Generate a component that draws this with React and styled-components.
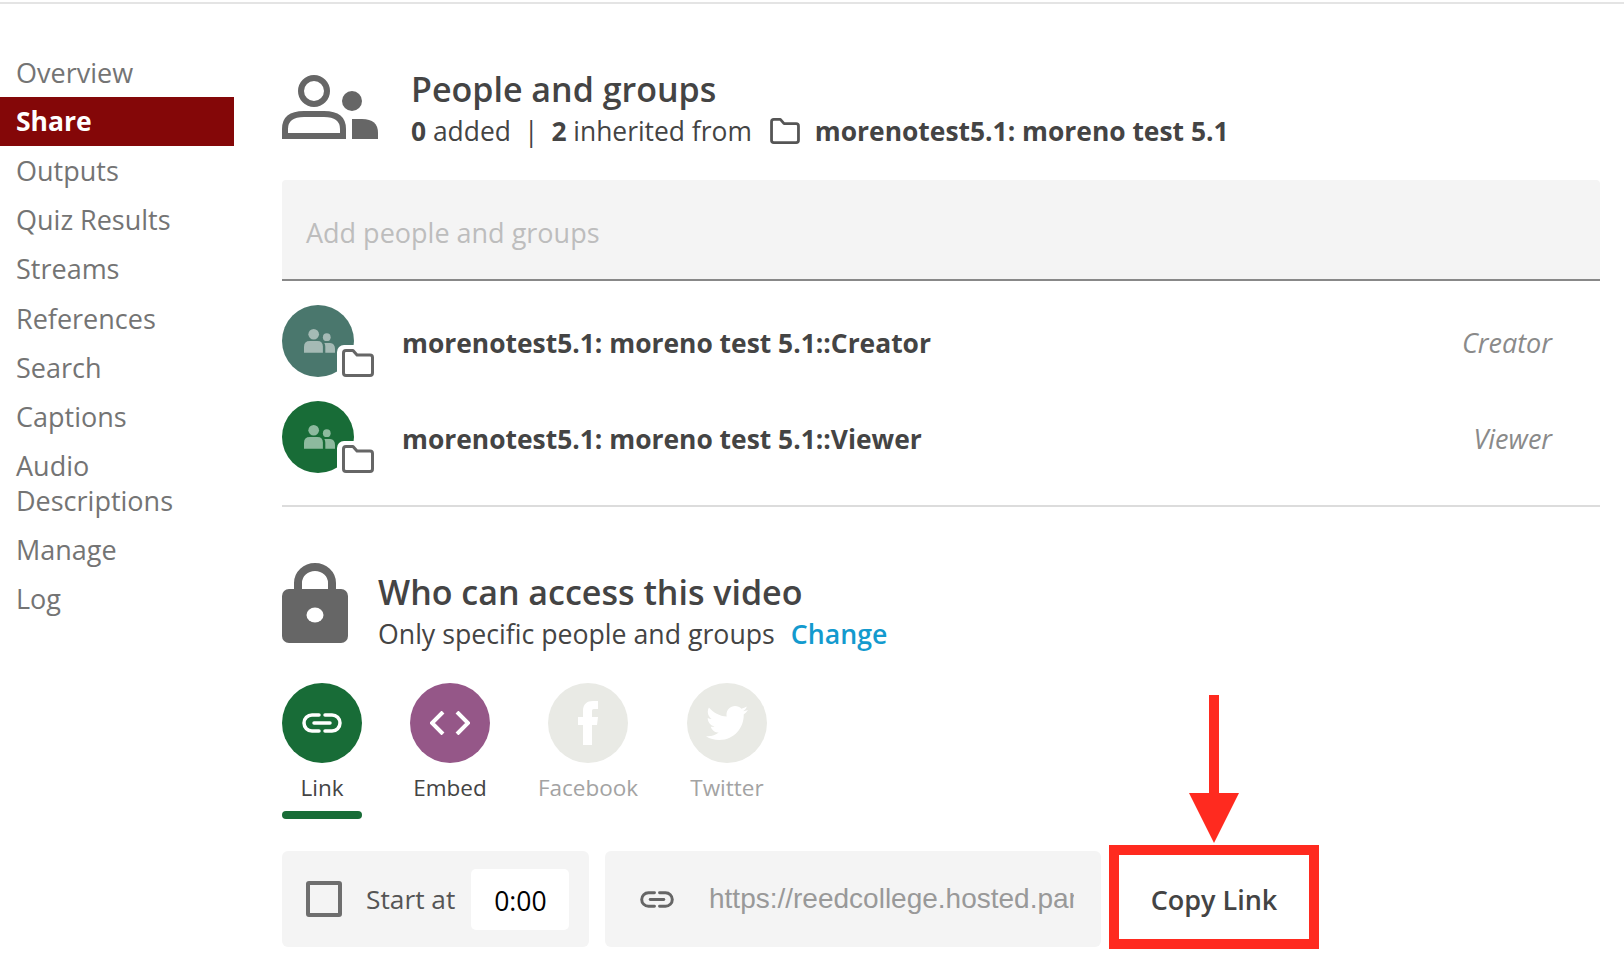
import React from 'react';
import styled, { createGlobalStyle } from 'styled-components';
import { FaTwitter } from 'react-icons/fa';

const GlobalStyle = createGlobalStyle`
  html, body {
    margin: 0;
    padding: 0;
    background: #fff;
    overflow: hidden;
  }
  body {
    font-family: "Open Sans", "Noto Sans", sans-serif;
    color: #444;
  }
  * { box-sizing: border-box; }
`;

const Page = styled.div`
  width: 1624px;
  height: 957px;
  border-top: 2px solid #e4e4e4;
  margin-top: 2px;
  display: flex;
  align-items: flex-start;
`;

const Sidebar = styled.nav`
  width: 234px;
  flex-shrink: 0;
  padding-top: 44px;
`;

const NavItem = styled.div`
  padding: 7.05px 16px;
  font-size: ${(p) => (p.$active ? 26.5 : 27)}px;
  line-height: 35px;
  color: ${(p) => (p.$active ? '#fff' : '#747474')};
  font-weight: ${(p) => (p.$active ? 700 : 400)};
  background: ${(p) => (p.$active ? '#840708' : 'transparent')};
`;

const Main = styled.main`
  flex: 1;
  padding: 70px 24px 0 48px;
`;

const Header = styled.header`
  display: flex;
  align-items: flex-start;
  gap: 33px;
`;

const HeaderText = styled.div`
  margin-top: -6px;
`;

const Title = styled.h2`
  margin: 0;
  font-size: 34px;
  line-height: 42px;
  font-weight: 600;
  color: #444;
`;

const SubLine = styled.div`
  display: flex;
  align-items: center;
  margin-top: 2px;
  font-size: 26.4px;
  line-height: 38px;
  color: #444;
  white-space: nowrap;

  b { font-weight: 700; }
`;

const Sep = styled.span`
  margin: 0 13px 0 13px;
`;

const FolderSlot = styled.span`
  display: inline-flex;
  margin: 0 15px 0 18px;
`;

const SearchBox = styled.div`
  margin-top: 30px;
  height: 101px;
  background: #f4f4f4;
  border-bottom: 2px solid #888;
  border-radius: 4px 4px 0 0;
  padding: 6px 24px 0;
  display: flex;
  align-items: center;
  font-size: 27px;
  color: #bdbdbd;
`;

const Row = styled.div`
  display: flex;
  align-items: center;
  height: 72px;
  margin-top: ${(p) => p.$gap}px;
`;

const Avatar = styled.div`
  position: relative;
  width: 72px;
  height: 72px;
  padding-left: 3px;
  border-radius: 50%;
  background: ${(p) => p.$color};
  display: flex;
  align-items: center;
  justify-content: center;
  flex-shrink: 0;
  margin-right: 48px;
`;

const FolderBadge = styled.div`
  position: absolute;
  left: 55px;
  top: 40px;
  padding: 4px 0 0 5px;
  width: 38px;
  height: 34px;
  background: #fff;
  border-radius: 7px;
  display: flex;
`;

const RowName = styled.div`
  flex: 1;
  padding-top: 4px;
  font-size: 26.4px;
  font-weight: 700;
  color: #444;
`;

const RowRole = styled.div`
  padding: 2px 48px 0 0;
  font-size: 27px;
  font-style: italic;
  color: #8a8a8a;
`;

const Divider = styled.hr`
  border: 0;
  height: 2px;
  margin: 32px 0 0;
  background: #dcdcdc;
`;

const AccessHeader = styled.div`
  margin-top: 56px;
  display: flex;
  align-items: flex-start;
  gap: 30px;
`;

const AccessText = styled.div`
  margin-top: 8px;
`;

const AccessSub = styled.div`
  font-size: 26.7px;
  line-height: 42px;
  color: #444;
`;

const ChangeLink = styled.a`
  color: #139ace;
  font-weight: 600;
  margin-left: 16px;
`;

const ShareTabs = styled.div`
  display: flex;
  margin-top: 28px;
`;

const ShareTab = styled.div`
  width: 80px;
  margin-right: ${(p) => p.$gap}px;
  display: flex;
  flex-direction: column;
  align-items: center;
  flex-shrink: 0;
`;

const TabCircle = styled.div`
  width: 80px;
  height: 80px;
  border-radius: 50%;
  background: ${(p) => p.$color};
  display: flex;
  align-items: center;
  justify-content: center;
  color: #fff;
`;

const TabLabel = styled.div`
  margin-top: 8px;
  font-size: 22.5px;
  line-height: 34px;
  white-space: nowrap;
  color: ${(p) => (p.$muted ? '#a3a3a3' : '#444')};
`;

const TabUnderline = styled.div`
  width: 80px;
  height: 8px;
  margin-top: 6px;
  border-radius: 4px;
  background: ${(p) => (p.$on ? '#186c37' : 'transparent')};
`;

const Controls = styled.div`
  display: flex;
  align-items: flex-start;
  margin-top: 26px;
`;

const StartBox = styled.div`
  width: 307px;
  height: 96px;
  margin-top: 6px;
  padding-left: 24px;
  background: #f4f4f4;
  border-radius: 6px;
  display: flex;
  align-items: center;
`;

const Checkbox = styled.div`
  width: 36px;
  height: 36px;
  border: 4px solid #6e6e6e;
  border-radius: 3px;
  margin-right: 24px;
`;

const StartLabel = styled.div`
  font-size: 26.3px;
  color: #555;
  margin-right: 16px;
  white-space: nowrap;
`;

const TimeInput = styled.div`
  width: 98px;
  height: 61px;
  padding-top: 3px;
  background: #fff;
  border-radius: 5px;
  display: flex;
  align-items: center;
  justify-content: center;
  font-size: 26.5px;
  color: #000;
`;

const UrlBox = styled.div`
  width: 496px;
  height: 96px;
  margin: 6px 0 0 16px;
  padding: 0 27px 0 35px;
  background: #f4f4f4;
  border-radius: 6px;
  display: flex;
  align-items: center;
  gap: 35px;
  overflow: hidden;
`;

const UrlText = styled.div`
  flex: 1;
  font-family: "Liberation Sans", Arial, sans-serif;
  font-size: 28px;
  color: #999;
  white-space: nowrap;
  overflow: hidden;
`;

const CopyWrap = styled.div`
  position: relative;
  margin-left: 8px;
`;

const CopyButton = styled.div`
  width: 210px;
  height: 104px;
  padding-top: 5px;
  border: 10px solid #ff2a1f;
  background: #fff;
  display: flex;
  align-items: center;
  justify-content: center;
  font-size: 27px;
  font-weight: 600;
  color: #444;
  white-space: nowrap;
`;

const CalloutArrow = styled.svg`
  position: absolute;
  left: 80px;
  top: -150px;
`;

const PeopleIcon = () => (
  <svg width="96" height="64" viewBox="0 0 96 64" fill="#666" style={{ flexShrink: 0, marginTop: 1 }}>
    <circle cx="32" cy="16" r="13" fill="none" stroke="#666" strokeWidth="6" />
    <path
      fillRule="evenodd"
      d="M0 64V54Q0 36 22 36H42Q64 36 64 54V64ZM6 58H58V54Q58 42 42 42H22Q6 42 6 54Z"
    />
    <circle cx="70" cy="26" r="10" />
    <path d="M70 44H80Q96 44 96 58V64H70Z" />
  </svg>
);

const GroupIcon = ({ fill }) => (
  <svg width="31" height="26" viewBox="0 0 32 26" fill={fill}>
    <circle cx="10" cy="6" r="5.5" />
    <path d="M0 25V19Q0 13 6 13H14Q19.500 13 19.500 19V25Z" />
    <circle cx="23.500" cy="9" r="4" />
    <path d="M22 25V19Q22 16.500 21 15H27Q32 15.500 32 21V25Z" />
  </svg>
);

const FolderIcon = ({ width = 32, height = 28, stroke = '#666' }) => (
  <svg width={width} height={height} viewBox="0 0 32 28" fill="none" stroke={stroke} strokeWidth="3" strokeLinejoin="round">
    <path d="M1.500 4Q1.500 1.500 4 1.500H11L15 6H28Q30.500 6 30.500 8.500V24Q30.500 26.500 28 26.500H4Q1.500 26.500 1.500 24Z" />
  </svg>
);

const LockIcon = () => (
  <svg width="66" height="80" viewBox="0 0 66 80" style={{ flexShrink: 0 }}>
    <path fill="none" stroke="#666" strokeWidth="8" d="M16 30V20A17 16 0 0 1 50 20V30" />
    <rect x="0" y="26" width="66" height="54" rx="7" fill="#666" />
    <ellipse cx="33" cy="52" rx="8.500" ry="7.500" fill="#fff" />
  </svg>
);

const LinkIcon = ({ stroke = '#fff', width = 40, height = 20 }) => (
  <svg width={width} height={height} viewBox="0 0 40 20" fill="none" stroke={stroke} strokeWidth="3.500" strokeLinecap="round">
    <path d="M17 2H10A8 8 0 0 0 10 18H17" />
    <path d="M23 2H30A8 8 0 0 1 30 18H23" />
    <path d="M12 10H28" />
  </svg>
);

const EmbedIcon = () => (
  <svg width="40" height="24" viewBox="0 0 40 24" fill="none" stroke="#fff" strokeWidth="4">
    <path d="M13 1L2 12L13 23" />
    <path d="M27 1L38 12L27 23" />
  </svg>
);

const FacebookIcon = () => (
  <svg width="20" height="44" viewBox="0 0 20 44" fill="#fff">
    <path d="M5 44V24H0V16H5V10C5 3 9 0 15 0H20V8H16C14 8 14 9 14 11V16H20L19 24H14V44Z" />
  </svg>
);

const navItems = ['Overview', 'Share', 'Outputs', 'Quiz Results', 'Streams', 'References', 'Search', 'Captions', 'Audio Descriptions', 'Manage', 'Log'];

const App = () => (
  <>
    <GlobalStyle />
    <Page>
      <Sidebar>
        {navItems.map((item) => (
          <NavItem key={item} $active={item === 'Share'}>{item}</NavItem>
        ))}
      </Sidebar>
      <Main>
        <Header>
          <PeopleIcon />
          <HeaderText>
            <Title>People and groups</Title>
            <SubLine>
              <b>0</b>&nbsp;added<Sep>|</Sep><b>2</b>&nbsp;inherited from
              <FolderSlot>
                <FolderIcon width={30} height={26} stroke="#555" />
              </FolderSlot>
              <b>morenotest5.1: moreno test 5.1</b>
            </SubLine>
          </HeaderText>
        </Header>

        <SearchBox>Add people and groups</SearchBox>

        <Row $gap={24}>
          <Avatar $color="#4a776d">
            <GroupIcon fill="#a5bab5" />
            <FolderBadge><FolderIcon /></FolderBadge>
          </Avatar>
          <RowName>morenotest5.1: moreno test 5.1::Creator</RowName>
          <RowRole>Creator</RowRole>
        </Row>
        <Row $gap={24}>
          <Avatar $color="#186c37">
            <GroupIcon fill="#8dba9e" />
            <FolderBadge><FolderIcon /></FolderBadge>
          </Avatar>
          <RowName>morenotest5.1: moreno test 5.1::Viewer</RowName>
          <RowRole>Viewer</RowRole>
        </Row>

        <Divider />

        <AccessHeader>
          <LockIcon />
          <AccessText>
            <Title>Who can access this video</Title>
            <AccessSub>
              Only specific people and groups<ChangeLink>Change</ChangeLink>
            </AccessSub>
          </AccessText>
        </AccessHeader>

        <ShareTabs>
          <ShareTab $gap={48}>
            <TabCircle $color="#186c37"><LinkIcon /></TabCircle>
            <TabLabel>Link</TabLabel>
            <TabUnderline $on />
          </ShareTab>
          <ShareTab $gap={58}>
            <TabCircle $color="#955788"><EmbedIcon /></TabCircle>
            <TabLabel>Embed</TabLabel>
            <TabUnderline />
          </ShareTab>
          <ShareTab $gap={59}>
            <TabCircle $color="#e9eae5"><FacebookIcon /></TabCircle>
            <TabLabel $muted>Facebook</TabLabel>
            <TabUnderline />
          </ShareTab>
          <ShareTab $gap={0}>
            <TabCircle $color="#e9eae5"><FaTwitter size={42} /></TabCircle>
            <TabLabel $muted>Twitter</TabLabel>
            <TabUnderline />
          </ShareTab>
        </ShareTabs>

        <Controls>
          <StartBox>
            <Checkbox />
            <StartLabel>Start at</StartLabel>
            <TimeInput>0:00</TimeInput>
          </StartBox>
          <UrlBox>
            <LinkIcon stroke="#666" width={34} height={17} />
            <UrlText>https://reedcollege.hosted.pan</UrlText>
          </UrlBox>
          <CopyWrap>
            <CopyButton>Copy Link</CopyButton>
            <CalloutArrow width="50" height="148" viewBox="0 0 50 148">
              <path fill="#ff2a1f" d="M20 0H30V98H50L25 148L0 98H20Z" />
            </CalloutArrow>
          </CopyWrap>
        </Controls>
      </Main>
    </Page>
  </>
);

export default App;
